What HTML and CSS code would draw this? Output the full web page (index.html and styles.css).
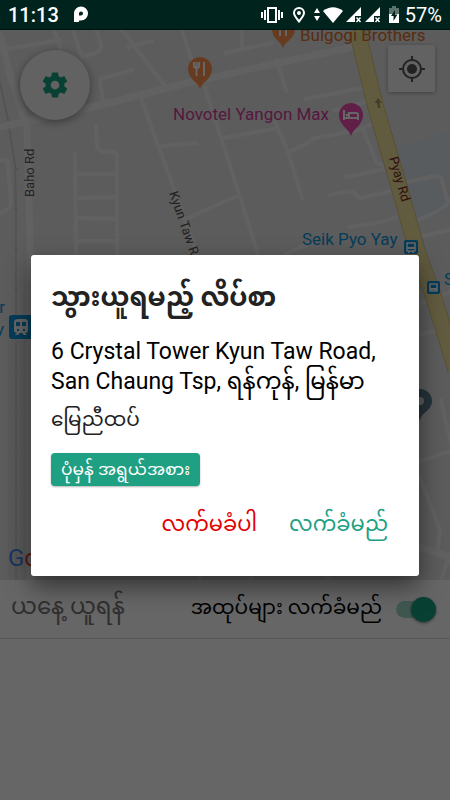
FILE: index.html
```html
<!DOCTYPE html>
<html lang="my">
<head>
  <meta charset="UTF-8">
  <meta name="viewport" content="width=device-width, initial-scale=1">
  <title>Pickup</title>
  <link rel="stylesheet" href="styles.css">
</head>
<body>
  <header class="status">
    <span class="clock">11:13</span>
    <svg class="plogo" width="14" height="17" viewBox="0 0 14 17"><path d="M2.500 16V7.500a4.500 4.500 0 1 1 4.500 4.500H5" fill="none" stroke="#fff" stroke-width="5"/></svg>
    <div class="status-icons">
      <svg width="22" height="16" viewBox="0 0 22 16" fill="none" stroke="#fff" stroke-width="2"><rect x="7" y="1" width="8" height="14"/><path d="M4 3v10M18 3v10M1 5v6M21 5v6"/></svg>
      <svg class="pin" width="12" height="16" viewBox="0 0 12 16" fill="none" stroke="#fff" stroke-width="2"><path d="M6 14.500C3 10.500 1 8.500 1 6a5 5 0 0 1 10 0c0 2.500-2 4.500-5 8.500z"/><circle cx="6" cy="6" r="1" fill="#fff"/></svg>
      <svg class="arrows" width="6" height="13" viewBox="0 0 6 13" fill="#fff"><path d="M3 0l3 5H0zM3 13l3-5H0z"/></svg>
      <svg width="20" height="16" viewBox="0 0 20 16" fill="#fff"><path d="M0 4Q10-3.500 20 4L10 16z"/></svg>
      <svg width="16" height="16" viewBox="0 0 16 16" fill="#fff"><path d="M15 0v9H9v6H0z"/><path d="M10.500 10.500l4 4.500M14.500 10.500l-4 4.500" stroke="#fff" stroke-width="1.500"/></svg>
      <svg width="16" height="16" viewBox="0 0 16 16" fill="#fff"><path d="M15 0v9H9v6H0z"/><path d="M10.500 10.500l4 4.500M14.500 10.500l-4 4.500" stroke="#fff" stroke-width="1.500"/></svg>
      <svg class="battery" width="10" height="17" viewBox="0 0 10 17"><path d="M3 0h4v2h3v6H0V2h3z" fill="#5b716c"/><path d="M0 8h10v9H0z" fill="#fff"/><path d="M6 4L2 10h2.500v5L8.500 8.500H6z" fill="#00241d"/></svg>
    </div>
    <span class="percent">57%</span>
  </header>

  <div class="screen">
    <main class="app">
      <section class="map">
        <svg class="map-canvas" viewBox="0 30 450 550" preserveAspectRatio="xMidYMid slice">
          <path d="M392 150L450 130V212L418 221z" fill="#dfe5ee"/>
          <path d="M8 340h24v240H8z" fill="#dedede"/>
          <!-- railway -->
          <path class="rail" d="M0 82L8 120 15 165 16 210V580"/>
          <path class="rail ticks" d="M16 168V580"/>
          <!-- streets -->
          <path class="street" d="M0 50L60 40M54 30L62 52M73 30L82 57 95 53Q102 50 101 44L96 30M122 30L165 86M128 47L152 41M182 30L198 80M133 70L100 79 103 102M141 98L158 145 175 192 197 254M205 88L225 150 258 254M162 146L197 143M188 218L237 196M96 126L97 146Q97 150 101 151L113 152Q117 153 117 157V254M75 154L76 254M76 174H117M76 198L117 197M76 218L117 219M76 241H117M0 160H5Q8 160 8 164L11 203Q11 209 0 213"/>
          <path class="street" d="M242 30V48M225 53L272 43M277 60L286 91M305 99L363 88M335 110L368 101M225 138L278 128M275 122L288 152 302 198M290 151Q296 150 315 138L358 130 378 122M363 130L377 163 385 165M345 177L385 169M330 195L352 191 360 198 392 191M350 227Q380 224 400 216M408 182L435 176Q441 176 442 180L448 202Q447 208 418 220M420 237L450 230M286 254L312 242M400 311L450 292M410 337L438 330M441 400L450 440M400 468L450 451M410 460L420 478 440 530 437 555M448 560L441 580M200 580V570M250 580L260 560M320 570L330 580"/>
          <path class="street wide" d="M0 35L10 75 27 127 28 160 30 240V580"/>
          <path class="street wide" d="M0 127L93 107 187 83 278 63 358 46M400 541L450 557"/>
          <!-- Pyay Rd -->
          <path d="M357 30L376 108 400 190 418 254 434 298 456 370" fill="none" stroke="#d8c98a" stroke-width="17"/>
          <path d="M357 30L376 108 400 190 418 254 434 298 456 370" fill="none" stroke="#f2e49e" stroke-width="15"/>
          <path d="M378 98l4 5h-2.500l1 5h-2.500l-1-5h-2.500z" fill="#a99c69"/>

          <g class="place food">
            <path d="M200 89c-2-7-12-10-12-20a12 12 0 0 1 24 0c0 10-10 13-12 20z"/>
            <path d="M194 62v4q0 2 2.500 2t2.500-2v-4M196.500 62v14M204 62v14" fill="none" stroke="#fff" stroke-width="2"/>
            <path d="M283 48c-2-7-11-9-11-19h23c0 10-10 12-12 19z"/>
            <path d="M280 30v6M286 30v6" stroke="#fff" stroke-width="2"/>
            <text x="300" y="41">Bulgogi Brothers</text>
          </g>
          <g class="place hotel">
            <path d="M351 136c-2-8-12-10-12-21a12 12 0 0 1 24 0c0 11-10 13-12 21z"/>
            <path d="M344 110v10M344 118h14v2M358 118v-3q0-2-2-2h-7v5" fill="none" stroke="#fff" stroke-width="2"/>
            <circle cx="347" cy="115" r="1.500" fill="#fff"/>
            <text x="173" y="120">Novotel Yangon Max</text>
          </g>
          <g class="place transit">
            <text x="302" y="245">Seik Pyo Yay</text>
            <text x="444" y="285">S</text>
            <text x="5" y="313" text-anchor="end">er</text>
            <text x="4" y="335" text-anchor="end">ay</text>
            <rect x="404" y="240" width="14" height="14" rx="2"/>
            <rect x="427" y="281" width="13" height="13" rx="2"/>
            <rect x="9" y="315" width="24" height="24" rx="3"/>
            <path d="M407 243h8v8h-8zM430 284h7v7h-7z" fill="none" stroke="#fff" stroke-width="1.500"/>
            <path d="M407 248h8M430 289h7M408 252h2M412 252h2" stroke="#fff" stroke-width="2"/>
            <path d="M17 319h8q3 0 3 3v8q0 3-3 3l2 2h-3l-2-2h-2l-2 2h-3l2-2q-3 0-3-3v-8q0-3 5-3z" fill="#fff"/>
            <path d="M16 322h4v4h-4zM22 322h4v4h-4zM17 329h2v2h-2zM23 329h2v2h-2z"/>
          </g>
          <path d="M420 421c-1-9-12-10-12-20a12 12 0 0 1 24 0c0 10-11 11-12 20z" fill="#607f91"/>
          <circle cx="420" cy="401" r="4" fill="#e6e6e6"/>
          <text class="road-name" transform="translate(34 197) rotate(-90)">Baho Rd</text>
          <text class="road-name" transform="translate(169 193) rotate(71)">Kyun Taw Rd</text>
          <text class="road-name major" transform="translate(389 158) rotate(74)">Pyay Rd</text>
          <text class="google" x="8" y="566"><tspan fill="#4285f4">G</tspan><tspan fill="#ea4335">o</tspan><tspan fill="#fbbc05">o</tspan><tspan fill="#4285f4">g</tspan><tspan fill="#34a853">l</tspan><tspan fill="#ea4335">e</tspan></text>
        </svg>
        <button class="fab" aria-label="Settings">
          <svg width="30" height="30" viewBox="0 0 24 24" fill="#14a37f"><path d="M19.430 12.980c.04-.32.07-.64.07-.98s-.03-.66-.07-.98l2.110-1.650c.19-.15.24-.42.12-.64l-2-3.460c-.12-.22-.39-.3-.61-.22l-2.490 1c-.52-.4-1.080-.73-1.690-.98l-.38-2.650A.488.488 0 0 0 14 2h-4c-.25 0-.46.18-.49.420l-.38 2.650c-.61.25-1.170.59-1.690.98l-2.490-1c-.23-.09-.49 0-.61.220l-2 3.460c-.13.22-.07.49.120.640l2.110 1.650c-.04.32-.07.65-.07.980s.03.66.07.980l-2.110 1.650c-.19.15-.24.42-.12.640l2 3.460c.12.22.39.3.61.220l2.490-1c.52.4 1.080.73 1.690.980l.38 2.650c.03.24.24.42.49.420h4c.25 0 .46-.18.49-.420l.38-2.650c.61-.25 1.170-.59 1.690-.980l2.490 1c.23.09.49 0 .61-.220l2-3.460c.12-.22.07-.49-.12-.640l-2.110-1.650zM12 15.500a3.500 3.500 0 1 1 0-7 3.500 3.500 0 0 1 0 7z"/></svg>
        </button>
        <button class="locate" aria-label="My location">
          <svg width="28" height="28" viewBox="0 0 28 28" fill="none" stroke="#555" stroke-width="2"><circle cx="14" cy="14" r="9"/><path d="M14 1v5M14 22v5M1 14h5M22 14h5"/><circle cx="14" cy="14" r="5" fill="#555" stroke="none"/></svg>
        </button>
      </section>

      <section class="list">
        <div class="accept-row">
          <h2 class="today">ယနေ့ ယူရန်</h2>
          <label class="accept-label" for="accept">အထုပ်များ လက်ခံမည်</label>
          <input class="switch" type="checkbox" role="switch" id="accept" checked>
        </div>
      </section>
    </main>

    <div class="scrim">
      <div class="dialog" role="dialog" aria-modal="true" aria-labelledby="dialog-title">
        <h1 class="dialog-title" id="dialog-title">သွားယူရမည့် လိပ်စာ</h1>
        <p class="address">6 Crystal Tower Kyun Taw Road, San Chaung Tsp, ရန်ကုန်, မြန်မာ</p>
        <p class="floor">မြေညီထပ်</p>
        <span class="chip">ပုံမှန် အရွယ်အစား</span>
        <div class="actions">
          <button class="action decline">လက်မခံပါ</button>
          <button class="action confirm">လက်ခံမည်</button>
        </div>
      </div>
    </div>
  </div>
</body>
</html>
```
FILE: styles.css
```css
* {
  box-sizing: border-box;
}
body {
  margin: 0;
  min-height: 100vh;
  display: flex;
  flex-direction: column;
  font-family: Roboto, "Noto Sans Myanmar", "Noto Sans", sans-serif;
  background: #fff;
}
h1, h2, p {
  margin: 0;
}
button {
  border: none;
  padding: 0;
  font-family: inherit;
  cursor: pointer;
}

/* status bar */
.status {
  display: flex;
  align-items: center;
  height: 30px;
  padding: 0 8px;
  background: #00241d;
  border-bottom: 1px solid #001510;
  color: #fff;
  font-size: 20px;
  font-weight: 500;
}
.plogo {
  margin-left: 15px;
}
.status-icons {
  display: flex;
  align-items: center;
  gap: 3px;
  margin-left: auto;
}
.pin {
  margin-left: 7px;
}
.arrows {
  margin-left: 6px;
}
.battery {
  margin-left: 5px;
}
.percent {
  margin-left: 6px;
  font-weight: 400;
}

/* map + list */
.screen {
  position: relative;
  flex: 1;
  display: flex;
}
.app {
  flex: 1;
  display: flex;
  flex-direction: column;
}
.map {
  position: relative;
  flex: 5 1 0;
  min-height: 0;
  background: #e6e6e6;
}
.map-canvas {
  position: absolute;
  inset: 0;
  width: 100%;
  height: 100%;
}
.street {
  fill: none;
  stroke: #f3f3f3;
  stroke-width: 4;
  stroke-linecap: round;
  stroke-linejoin: round;
}
.wide {
  stroke-width: 7;
}
.rail {
  fill: none;
  stroke: #cfcfcf;
  stroke-width: 2;
}
.ticks {
  stroke-width: 4;
  stroke-dasharray: 2 38;
}
.place {
  font-size: 17px;
}
.food {
  fill: #ff9352;
}
.hotel {
  fill: #f04fb0;
}
.transit {
  fill: #0b96dc;
}
.food text {
  fill: #dc7028;
}
.hotel text {
  fill: #d63c9c;
}
.road-name {
  font-size: 13px;
  fill: #555;
}
.major {
  fill: #7a2b22;
}
.google {
  font-size: 24px;
}
.fab {
  position: absolute;
  top: 20px;
  left: 20px;
  display: grid;
  place-items: center;
  width: 70px;
  height: 70px;
  border-radius: 50%;
  background: #f5f5f5;
  box-shadow: 0 2px 8px rgba(0, 0, 0, .4);
}
.locate {
  position: absolute;
  top: 15px;
  right: 15px;
  display: grid;
  place-items: center;
  width: 47px;
  height: 47px;
  border-radius: 2px;
  background: #f5f5f5;
  box-shadow: 0 1px 4px rgba(0, 0, 0, .3);
}
.list {
  flex: 2 1 0;
}
.accept-row {
  display: flex;
  align-items: center;
  height: 59px;
  padding: 0 14px 0 11px;
  border-bottom: 1px solid #ddd;
}
.today {
  font-size: 23px;
  font-weight: 400;
  color: #777;
}
.accept-label {
  margin-left: auto;
  font-size: 20px;
  color: #000;
}
.switch {
  appearance: none;
  position: relative;
  width: 40px;
  height: 17px;
  margin: 0 0 0 14px;
  border-radius: 9px;
  background: #a1dacb;
}
.switch::before {
  content: "";
  position: absolute;
  top: -4px;
  right: 0;
  width: 25px;
  height: 25px;
  border-radius: 50%;
  background: #14a37f;
  box-shadow: 0 1px 3px rgba(0, 0, 0, .5);
}

/* dialog */
.scrim {
  position: absolute;
  inset: 0;
  display: flex;
  align-items: center;
  padding: 0 31px;
  background: rgba(0, 0, 0, .6);
}
.dialog {
  flex: 1;
  padding: 20px;
  border-radius: 3px;
  background: #fff;
  box-shadow: 0 10px 24px rgba(0, 0, 0, .5);
}
.dialog-title {
  margin-bottom: 18px;
  font-size: 26px;
  line-height: 44px;
  font-weight: 700;
  color: #222;
}
.address {
  font-size: 23px;
  line-height: 30px;
  color: #000;
}
.floor {
  margin-top: 6px;
  font-size: 20px;
  line-height: 32px;
  color: #222;
}
.chip {
  display: inline-block;
  margin-top: 18px;
  padding: 0 10px;
  border-radius: 4px;
  background: #20a083;
  box-shadow: 0 1px 2px rgba(0, 0, 0, .3);
  color: #fff;
  font-size: 17px;
  line-height: 33px;
}
.actions {
  display: flex;
  justify-content: flex-end;
  gap: 32px;
  margin-top: 20px;
  padding: 0 11px 14px 0;
}
.action {
  background: none;
  font-size: 21px;
  line-height: 36px;
}
.decline {
  color: #e00000;
}
.confirm {
  color: #20a083;
}
```
